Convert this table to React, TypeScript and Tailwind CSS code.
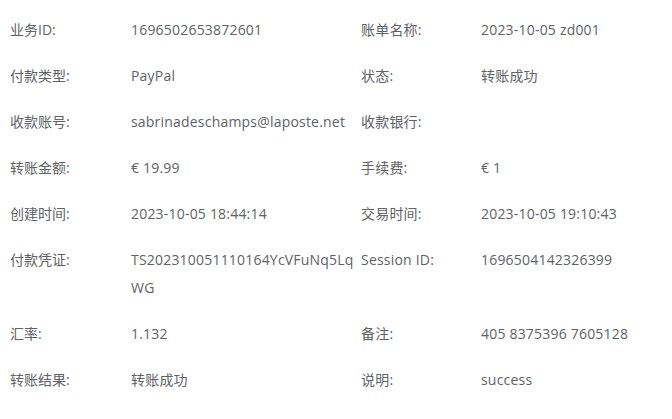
const rows: [string, string, string, string][] = [
  ["业务ID:", "1696502653872601", "账单名称:", "2023-10-05 zd001"],
  ["付款类型:", "PayPal", "状态:", "转账成功"],
  ["收款账号:", "sabrinadeschamps@laposte.net", "收款银行:", ""],
  ["转账金额:", "€ 19.99", "手续费:", "€ 1"],
  ["创建时间:", "2023-10-05 18:44:14", "交易时间:", "2023-10-05 19:10:43"],
  ["付款凭证:", "TS202310051110164YcVFuNq5LqWG", "Session ID:", "1696504142326399"],
  ["汇率:", "1.132", "备注:", "405 8375396 7605128"],
  ["转账结果:", "转账成功", "说明:", "success"],
];

const App = () => {
  return (
    <div
      className="w-[672px] h-[419px] bg-white pt-[7px] pl-[10px] text-[14px] leading-[28px] text-[#606266]"
      style={{ fontFamily: '"Open Sans", "Noto Sans CJK SC", sans-serif' }}
    >
      {rows.map(([l1, v1, l2, v2]) => (
        <div key={l1} className="grid grid-cols-[121px_230px_120px_1fr] py-[9px]">
          <div>{l1}</div>
          <div className="pr-[6px] break-all tracking-[0.2px]">{v1}</div>
          <div className="tracking-[0.2px]">{l2}</div>
          <div className="break-all tracking-[0.2px]">{v2}</div>
        </div>
      ))}
    </div>
  );
};

export default App;
